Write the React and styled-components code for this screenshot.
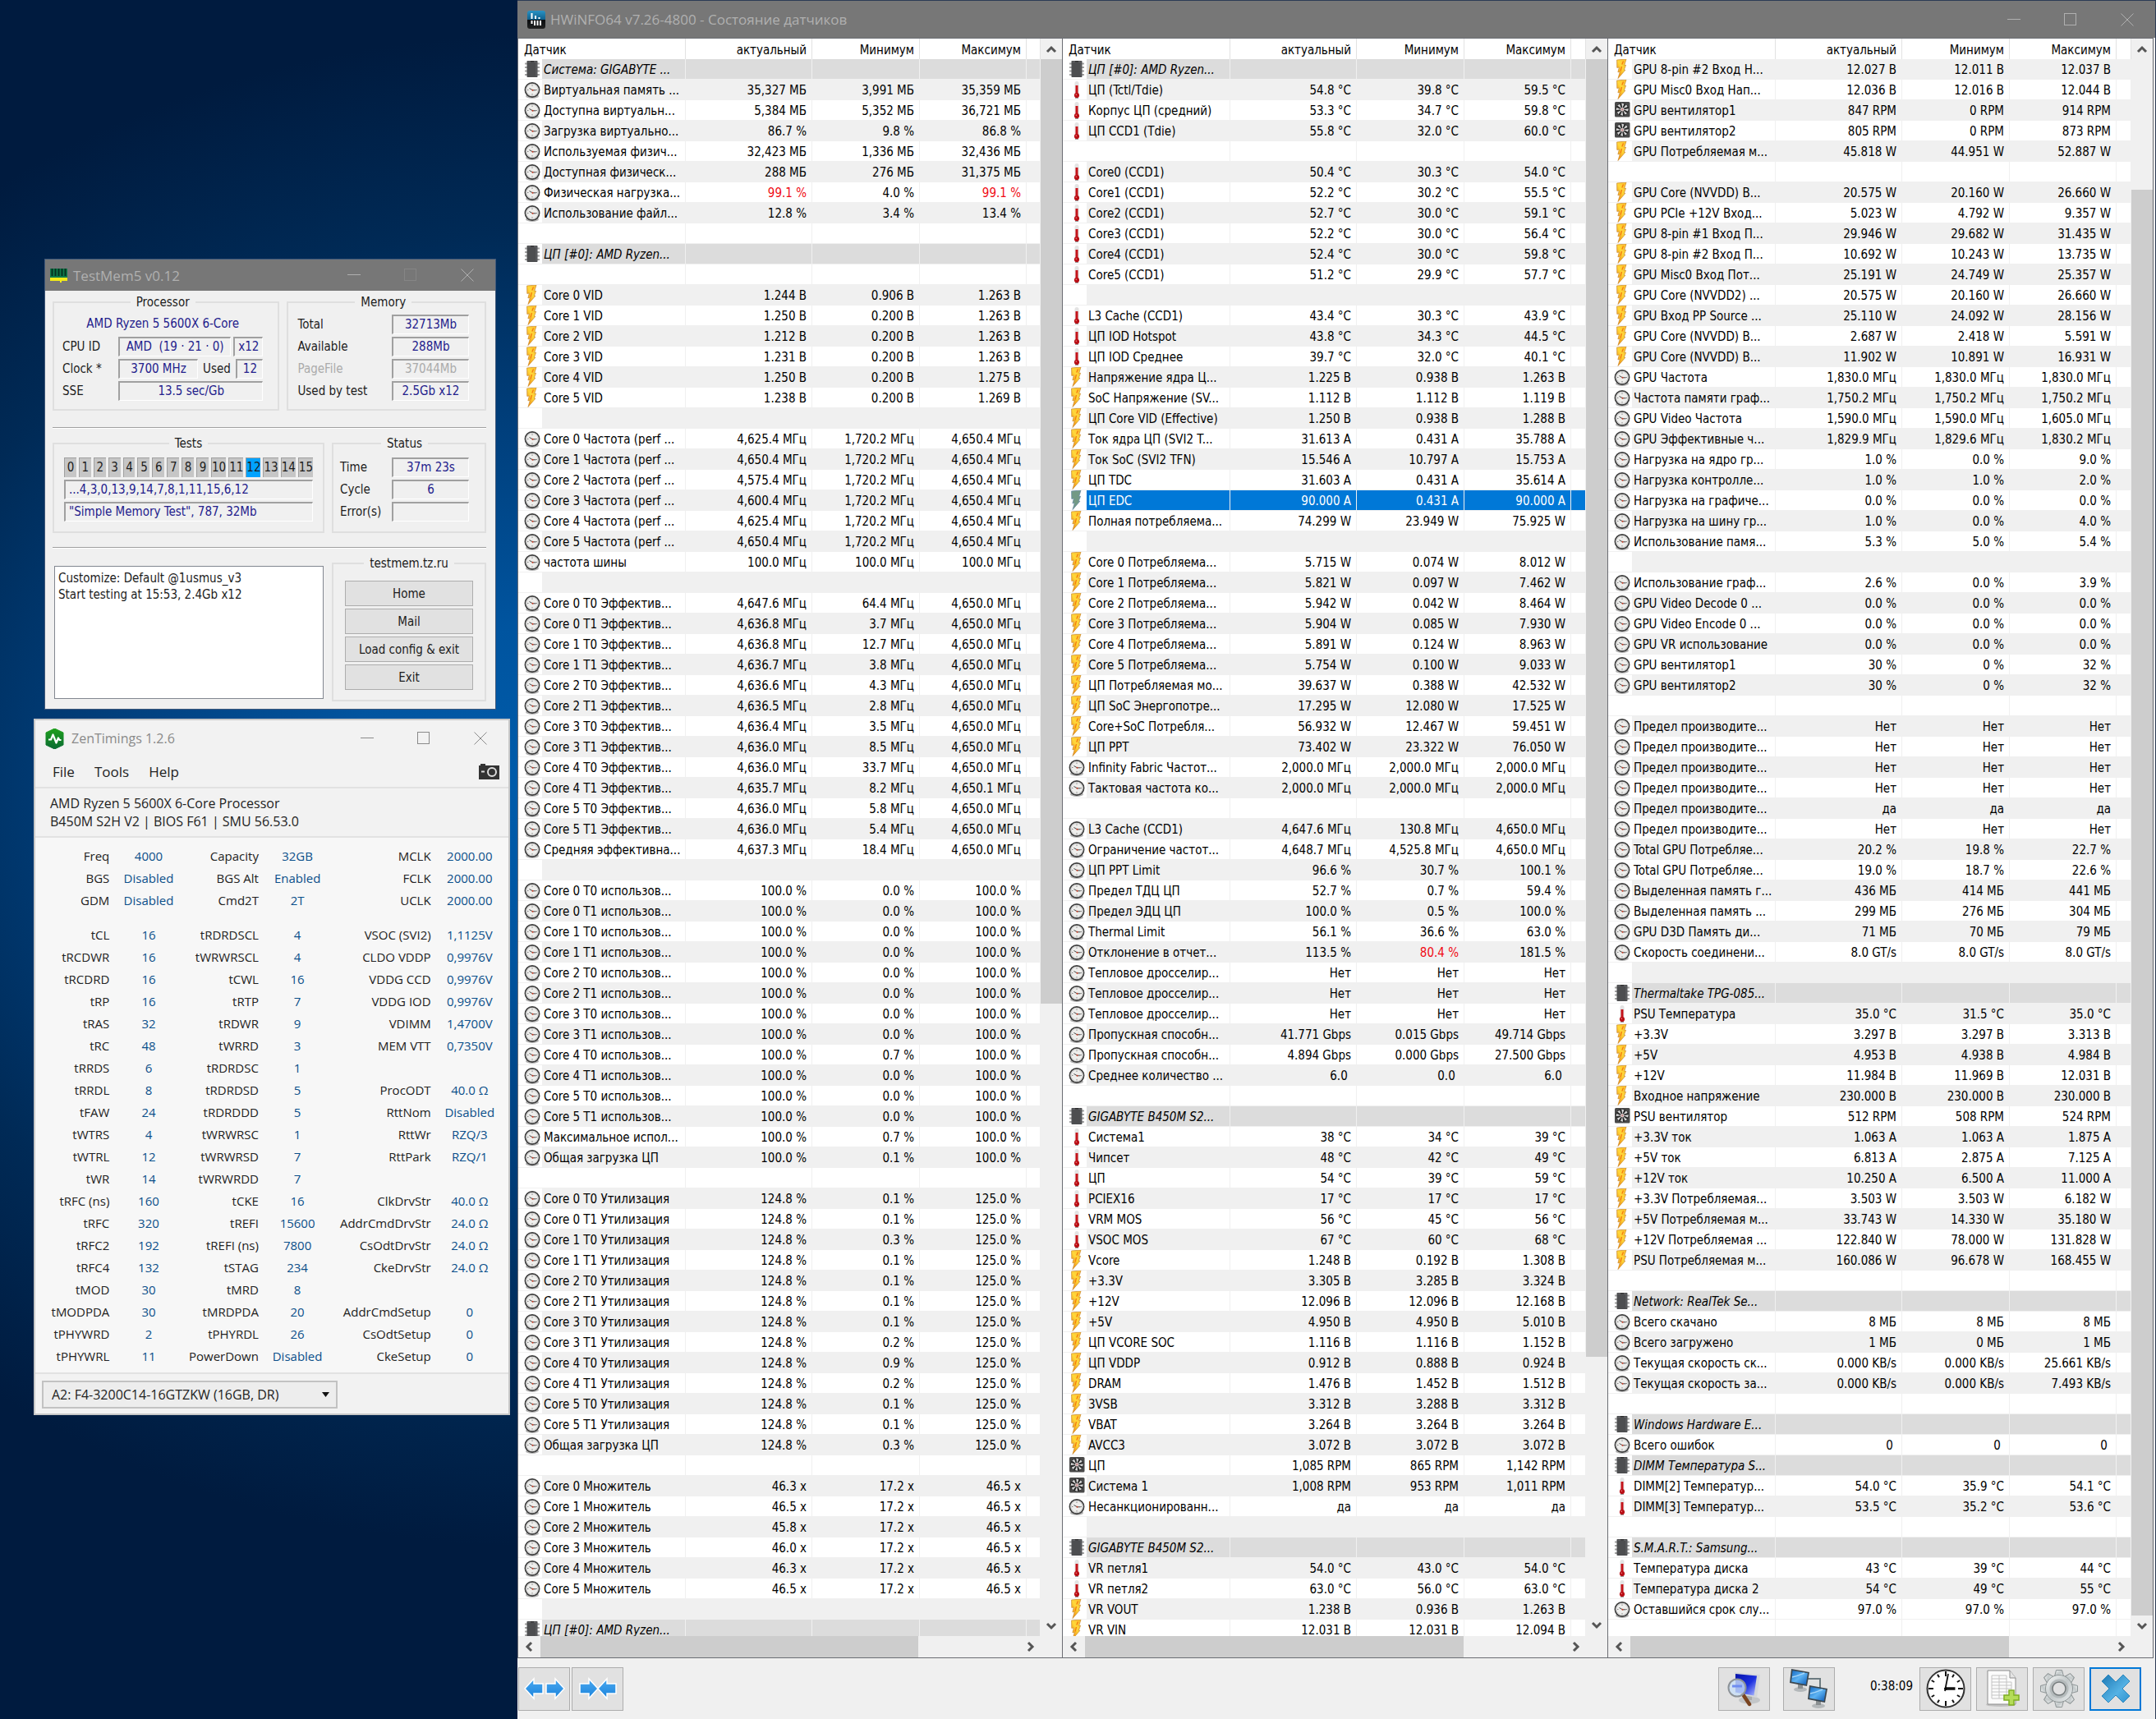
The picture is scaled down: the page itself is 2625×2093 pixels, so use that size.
import React from "react";
import styled, { createGlobalStyle, css } from "styled-components";

const tahoma = `"DejaVu Sans Condensed", "Noto Sans", sans-serif`;
const segoe = `"Open Sans", "Noto Sans", sans-serif`;

const GlobalStyle = createGlobalStyle`
  * {
    box-sizing: border-box;
  }
  body {
    margin: 0;
    font-family: ${tahoma};
    font-size: 15px;
    color: #000;
  }
  button, select, textarea {
    font: inherit;
    color: inherit;
    margin: 0;
    border-radius: 0;
  }
`;

/* ---------- desktop ---------- */

const Desktop = styled.div`
  display: grid;
  grid-template-columns: 24% minmax(0, 1fr);
  height: 100vh;
  min-height: 1750px;
  background: radial-gradient(
    ellipse 1100px 920px at 25% 46%,
    #005cab 0%,
    #00549f 22%,
    #003f7c 48%,
    #002a56 74%,
    #001b3f 100%
  );
`;
const Side = styled.div`
  display: flex;
  flex-direction: column;
  gap: 11px;
  padding: 315px 9px 0 41px;
`;

/* ---------- window title bars ---------- */

const TitleBar = styled.header`
  display: flex;
  align-items: center;
  height: ${(p) => p.$height}px;
  flex: none;
  padding-left: ${(p) => p.$pad}px;
  background: ${(p) => (p.$light ? "#f2f2f2" : "#777777")};
  color: ${(p) => (p.$light ? "#8a8a8a" : "#b0b0b0")};
  font-family: ${segoe};
  font-size: ${(p) => (p.$light ? 16 : 17)}px;
`;
const Title = styled.span`
  flex: 1;
  padding-left: ${(p) => p.$gap}px;
  white-space: nowrap;
`;
const TitleButton = styled.button`
  display: flex;
  align-items: center;
  justify-content: center;
  width: 69px;
  height: 100%;
  padding: 0;
  border: 0;
  background: none;
  opacity: ${(p) => (p.disabled ? 0.25 : 1)};
`;

const Controls = ({ noMax }) => (
  <>
    <TitleButton aria-label="Minimize">
      <svg width="16" height="16" stroke="currentColor">
        <path d="M0 7.5h16" />
      </svg>
    </TitleButton>
    <TitleButton aria-label="Maximize" disabled={noMax}>
      <svg width="16" height="16" stroke="currentColor" fill="none">
        <rect x=".5" y=".5" width="14" height="14" />
      </svg>
    </TitleButton>
    <TitleButton aria-label="Close">
      <svg width="16" height="16" stroke="currentColor">
        <path d="M.5.5l15 15M15.5.5l-15 15" />
      </svg>
    </TitleButton>
  </>
);

/* ---------- TestMem5 ---------- */

const MemWindow = styled.section`
  margin: 0 17px 0 13px;
  height: 549px;
  border: 1px solid #41597a;
  background: #f0f0f0;
  color: #1c1c1c;
`;
const MemBody = styled.div`
  padding: 3px 11px 0 9px;
`;
const MemRow = styled.div`
  display: grid;
  grid-template-columns: ${(p) => p.$cols};
  gap: 9px;
`;
const Group = styled.fieldset`
  min-width: 0;
  height: ${(p) => p.$height}px;
  margin: 0;
  padding: ${(p) => p.$pad};
  border: 2px solid #dfdfdf;
`;
const Legend = styled.legend`
  margin: 0 auto;
  padding: 0 7px;
  line-height: 22px;
`;
const Rule = styled.hr`
  height: 2px;
  margin: ${(p) => p.$margin};
  border: 0;
  border-top: 1px solid #a0a0a0;
  border-bottom: 1px solid #fff;
`;
const Line = styled.div`
  display: flex;
  align-items: center;
  gap: 3px;
  height: 24px;
  margin-bottom: 3px;
  color: ${(p) => (p.$off ? "#ababab" : "inherit")};
`;
const Caption = styled.span`
  flex: ${(p) => (p.$width ? `0 0 ${p.$width}px` : 1)};
  padding-left: ${(p) => (p.$center ? 3 : 0)}px;
  white-space: nowrap;
`;
const Sunken = styled.span`
  flex: ${(p) => (p.$width ? `0 0 ${p.$width}px` : 1)};
  height: 24px;
  padding: 0 4px;
  border: 1px solid;
  border-width: 2px 1px 1px 2px;
  border-color: #a0a0a0 #fff #fff #a0a0a0;
  color: ${(p) => (p.$off ? "#ababab" : "#23208c")};
  line-height: 20px;
  text-align: ${(p) => (p.$left ? "left" : "center")};
  white-space: pre;
`;
const CpuName = styled.div`
  height: 26px;
  margin-bottom: 3px;
  color: #23208c;
  line-height: 26px;
  text-align: center;
`;
const TestList = styled.ol`
  display: grid;
  grid-template-columns: repeat(16, 1fr);
  gap: 3px;
  height: 24px;
  margin: 0 0 3px;
  padding: 0;
  list-style: none;
`;
const TestItem = styled.li`
  display: flex;
  justify-content: center;
  border-top: 1px solid #a0a0a0;
  border-left: 1px solid #a0a0a0;
  background: ${(p) => (p.$active ? "#00a2ff" : "#c6c6c6")};
  line-height: 22px;
`;
const Log = styled.textarea`
  display: block;
  height: 162px;
  margin: 14px 1px 0 2px;
  padding: 4px;
  border: 1px solid #828790;
  background: #fff;
  line-height: 20px;
  resize: none;
  overflow: hidden;
`;
const MemButton = styled.button`
  display: block;
  width: 100%;
  height: 31px;
  margin-bottom: 3px;
  padding: 0;
  border: 1px solid #adadad;
  background: #e1e1e1;
  white-space: nowrap;
`;

const memory = [
  ["Total", "32713Mb"],
  ["Available", "288Mb"],
  ["PageFile", "37044Mb", true],
  ["Used by test", "2.5Gb x12"],
];
const status = [
  ["Time", "37m 23s"],
  ["Cycle", "6"],
  ["Error(s)", ""],
];

const TestMem = () => (
  <MemWindow>
    <TitleBar $height={38} $pad={6}>
      <svg width="21" height="17" viewBox="0 0 21 17">
        <rect width="21" height="11" fill="#0d7a4a" />
        <path d="M2.5 0v9M6.5 0v9M10.5 0v9M14.5 0v9M18.5 0v9" stroke="#05301f" strokeWidth="2" />
        <path d="M0 11h21v4h-7v2h-2v-2H0z" fill="#f2ea18" />
      </svg>
      <Title $gap={7}>TestMem5 v0.12</Title>
      <Controls noMax />
    </TitleBar>
    <MemBody>
      <MemRow $cols="277fr 243fr">
        <Group $height={143} $pad="2px 18px 0 10px">
          <Legend>Processor</Legend>
          <CpuName>AMD Ryzen 5 5600X 6-Core</CpuName>
          <Line>
            <Caption $width={65}>CPU ID</Caption>
            <Sunken>AMD  (19 · 21 · 0)</Sunken>
            <Sunken $width={33}>x12</Sunken>
          </Line>
          <Line>
            <Caption $width={65}>Clock *</Caption>
            <Sunken $width={97}>3700 MHz</Sunken>
            <Caption $center>Used</Caption>
            <Sunken $width={33}>12</Sunken>
          </Line>
          <Line>
            <Caption $width={65}>SSE</Caption>
            <Sunken>13.5 sec/Gb</Sunken>
          </Line>
        </Group>
        <Group $height={143} $pad="4px 19px 0 11px">
          <Legend>Memory</Legend>
          {memory.map(([label, value, off]) => (
            <Line key={label} $off={off}>
              <Caption>{label}</Caption>
              <Sunken $width={94} $off={off}>{value}</Sunken>
            </Line>
          ))}
        </Group>
      </MemRow>
      <Rule $margin="20px 0 7px" />
      <MemRow $cols="331fr 188fr">
        <Group $height={120} $pad="6px 12px 0">
          <Legend>Tests</Legend>
          <TestList>
            {[...Array(16).keys()].map((n) => (
              <TestItem key={n} $active={n === 12}>{n}</TestItem>
            ))}
          </TestList>
          <Line>
            <Sunken $left>...4,3,0,13,9,14,7,8,1,11,15,6,12</Sunken>
          </Line>
          <Line>
            <Sunken $left>"Simple Memory Test", 787, 32Mb</Sunken>
          </Line>
        </Group>
        <Group $height={120} $pad="6px 19px 0 8px">
          <Legend>Status</Legend>
          {status.map(([label, value]) => (
            <Line key={label}>
              <Caption>{label}</Caption>
              <Sunken $width={94}>{value}</Sunken>
            </Line>
          ))}
        </Group>
      </MemRow>
      <Rule $margin="17px 0 7px" />
      <MemRow $cols="331fr 188fr">
        <Log
          readOnly
          aria-label="Log"
          value={"Customize: Default @1usmus_v3\nStart testing at 15:53, 2.4Gb x12"}
        />
        <Group $height={179} $pad="10px 14px 0">
          <Legend>testmem.tz.ru</Legend>
          <MemButton>Home</MemButton>
          <MemButton>Mail</MemButton>
          <MemButton>Load config &amp; exit</MemButton>
          <MemButton>Exit</MemButton>
        </Group>
      </MemRow>
    </MemBody>
  </MemWindow>
);

/* ---------- ZenTimings ---------- */

const ZenWindow = styled.section`
  border: 2px solid #c8c8c8;
  background: #f7f7f7;
  color: #222;
  font-family: ${segoe};
  font-size: 15px;
`;
const MenuBar = styled.nav`
  display: flex;
  align-items: center;
  gap: 24px;
  height: 39px;
  padding: 0 11px 0 21px;
  border-bottom: 2px solid #e2e2e2;
  background: #f2f2f2;
`;
const MenuItem = styled.button`
  padding: 0;
  border: 0;
  background: none;
  font-size: 17px;
  &:last-child {
    display: flex;
    margin-left: auto;
  }
`;
const BoardInfo = styled.div`
  padding: 7px 18px;
  border-bottom: 2px solid #e2e2e2;
  background: #f2f2f2;
  font-size: 16px;
  line-height: 22px;
`;
const TimingTable = styled.table`
  width: 100%;
  margin: 8px 0 7px;
  border-collapse: collapse;
  table-layout: fixed;
  tr {
    height: 27px;
  }
`;
const TimingGap = styled.tr`
  && {
    height: 15px;
  }
`;
const TimingName = styled.th`
  padding: 0;
  font-weight: 400;
  line-height: 26px;
  text-align: right;
  white-space: nowrap;
`;
const TimingValue = styled.td`
  padding: 0;
  color: #0b4f8a;
  line-height: 26px;
  text-align: center;
`;
const ZenFooter = styled.footer`
  height: 50px;
  padding: 8px;
  border-top: 2px solid #e2e2e2;
  background: #f2f2f2;
`;
const SelectWrap = styled.div`
  position: relative;
  width: 360px;
  svg {
    position: absolute;
    right: 10px;
    top: 14px;
  }
`;
const Select = styled.select`
  width: 100%;
  height: 34px;
  padding: 0 10px;
  border: 2px solid #c2c2c2;
  background: #ededed;
  font-size: 16px;
  appearance: none;
`;

const clocks = [
  ["Freq", "4000", "Capacity", "32GB", "MCLK", "2000.00"],
  ["BGS", "Disabled", "BGS Alt", "Enabled", "FCLK", "2000.00"],
  ["GDM", "Disabled", "Cmd2T", "2T", "UCLK", "2000.00"],
];
const timings = [
  ["tCL", "16", "tRDRDSCL", "4", "VSOC (SVI2)", "1,1125V"],
  ["tRCDWR", "16", "tWRWRSCL", "4", "CLDO VDDP", "0,9976V"],
  ["tRCDRD", "16", "tCWL", "16", "VDDG CCD", "0,9976V"],
  ["tRP", "16", "tRTP", "7", "VDDG IOD", "0,9976V"],
  ["tRAS", "32", "tRDWR", "9", "VDIMM", "1,4700V"],
  ["tRC", "48", "tWRRD", "3", "MEM VTT", "0,7350V"],
  ["tRRDS", "6", "tRDRDSC", "1", "", ""],
  ["tRRDL", "8", "tRDRDSD", "5", "ProcODT", "40.0 Ω"],
  ["tFAW", "24", "tRDRDDD", "5", "RttNom", "Disabled"],
  ["tWTRS", "4", "tWRWRSC", "1", "RttWr", "RZQ/3"],
  ["tWTRL", "12", "tWRWRSD", "7", "RttPark", "RZQ/1"],
  ["tWR", "14", "tWRWRDD", "7", "", ""],
  ["tRFC (ns)", "160", "tCKE", "16", "ClkDrvStr", "40.0 Ω"],
  ["tRFC", "320", "tREFI", "15600", "AddrCmdDrvStr", "24.0 Ω"],
  ["tRFC2", "192", "tREFI (ns)", "7800", "CsOdtDrvStr", "24.0 Ω"],
  ["tRFC4", "132", "tSTAG", "234", "CkeDrvStr", "24.0 Ω"],
  ["tMOD", "30", "tMRD", "8", "", ""],
  ["tMODPDA", "30", "tMRDPDA", "20", "AddrCmdSetup", "0"],
  ["tPHYWRD", "2", "tPHYRDL", "26", "CsOdtSetup", "0"],
  ["tPHYWRL", "11", "PowerDown", "Disabled", "CkeSetup", "0"],
];

const TimingRow = ({ cells }) => (
  <tr>
    {cells.map((text, i) =>
      i % 2 ? <TimingValue key={i}>{text}</TimingValue> : <TimingName key={i}>{text}</TimingName>
    )}
  </tr>
);

const ZenTimings = () => (
  <ZenWindow>
    <TitleBar $light $height={44} $pad={12}>
      <svg width="23" height="25" viewBox="0 0 23 25">
        <path d="M11.500 0L22 5v15l-10.500 5L1 20V5z" fill="url(#zen)" stroke="url(#zen)" strokeLinejoin="round" />
        <path d="M4 13.500h3l2.500-6 4 10 2.500-6 1.500 2.500h2" fill="none" stroke="#fff" strokeWidth="2.200" strokeLinejoin="round" />
      </svg>
      <Title $gap={9}>ZenTimings 1.2.6</Title>
      <Controls />
    </TitleBar>
    <MenuBar>
      <MenuItem>File</MenuItem>
      <MenuItem>Tools</MenuItem>
      <MenuItem>Help</MenuItem>
      <MenuItem aria-label="Screenshot">
        <svg width="25" height="19" viewBox="0 0 25 19">
          <path d="M0 2h2V0h6v2h17v17H0z" fill="#333" />
          <circle cx="16" cy="10" r="5" fill="none" stroke="#ddd" strokeWidth="2" />
          <path d="M3 9.500h4" stroke="#ddd" strokeWidth="2" />
        </svg>
      </MenuItem>
    </MenuBar>
    <BoardInfo>
      <div>AMD Ryzen 5 5600X 6-Core Processor</div>
      <div>B450M S2H V2 | BIOS F61 | SMU 56.53.0</div>
    </BoardInfo>
    <TimingTable>
      <colgroup>
        <col width="90" />
        <col width="95" />
        <col width="86" />
        <col width="94" />
        <col width="115" />
        <col width="94" />
      </colgroup>
      <tbody>
        {clocks.map((cells) => <TimingRow key={cells[0]} cells={cells} />)}
        <TimingGap />
        {timings.map((cells) => <TimingRow key={cells[0]} cells={cells} />)}
      </tbody>
    </TimingTable>
    <ZenFooter>
      <SelectWrap>
        <Select aria-label="Memory module">
          <option>A2: F4-3200C14-16GTZKW (16GB, DR)</option>
        </Select>
        <svg width="9" height="6"><path d="M0 0h9L4.500 6z" fill="#111" /></svg>
      </SelectWrap>
    </ZenFooter>
  </ZenWindow>
);

/* ---------- HWiNFO64 ---------- */

const HwWindow = styled.section`
  display: flex;
  flex-direction: column;
  min-height: 0;
  border-top: 1px solid #2c3b55;
  border-right: 1px solid #2c3b55;
  background: #f0f0f0;
`;
const Panels = styled.main`
  display: grid;
  grid-template-columns: repeat(3, minmax(0, 1fr));
  flex: 1;
  min-height: 0;
  padding-right: 2px;
`;
const Panel = styled.div`
  display: grid;
  grid-template-columns: minmax(0, 1fr) 26px;
  grid-template-rows: minmax(0, 1fr) 26px;
  min-height: 0;
  border: 1px solid #6b6d73;
  & + & {
    margin-left: -1px;
  }
`;
const ListArea = styled.div`
  overflow: hidden;
  background: #fff;
`;
const SensorTable = styled.table`
  width: 100%;
  border-collapse: separate;
  border-spacing: 0;
  table-layout: fixed;
`;
const cell = css`
  height: 25px;
  padding: 2px 6px 0 0;
  border-right: 1px solid #f0f0f0;
  line-height: 22px;
  text-align: right;
  white-space: nowrap;
`;
const HeadCell = styled.th`
  ${cell}
  border-color: #e2e2e2;
  font-weight: 400;
  ${(p) => p.$first && "padding-left: 7px; text-align: left;"}
`;
const Cell = styled.td`
  ${cell}
  border-bottom: 1px solid #f0f0f0;
  color: ${(p) => (p.$alert ? "#f00a14" : "inherit")};
`;
const IconCell = styled.td`
  height: 25px;
  padding: 0 0 0 7px;
  border-bottom: 1px solid #f0f0f0;
  background: #fff;
  svg {
    display: block;
  }
`;
const NameCell = styled(Cell)`
  padding: 2px 0 0 2px;
  text-align: left;
`;
const Row = styled.tr`
  background: ${(p) => (p.$odd ? "#f0f0f0" : "#fff")};
  ${(p) =>
    p.$section &&
    css`
      background: #dcdcdc;
      font-style: italic;
    `}
  ${(p) =>
    p.$selected &&
    css`
      background: #0078d7;
      color: #fff;
    `}
`;

// Thumb range is given in thousandths of the track
const VScroll = styled.div`
  display: grid;
  grid-template-rows: 25px ${(p) => p.$from}fr ${(p) => p.$to - p.$from}fr ${(p) => 1000 - p.$to}fr 25px;
`;
const HScroll = styled.div`
  display: grid;
  grid-template-columns: 27px 79fr 21fr 27px;
`;
const Thumb = styled.div`
  background: #cdcdcd;
`;
const ScrollButton = styled.button`
  display: flex;
  align-items: center;
  justify-content: center;
  padding: 0;
  border: 0;
  background: none;
  color: #555;
`;

const arrowPaths = {
  up: "M2 10l5-5 5 5",
  down: "M2 4l5 5 5-5",
  left: "M9 2L4 7l5 5",
  right: "M5 2l5 5-5 5",
};
const Arrow = ({ dir }) => (
  <ScrollButton aria-label={`Scroll ${dir}`}>
    <svg width="14" height="14" fill="none" stroke="currentColor" strokeWidth="3">
      <path d={arrowPaths[dir]} />
    </svg>
  </ScrollButton>
);

// Icons shared by every sensor row
const Sprites = styled.svg`
  position: absolute;
  width: 0;
  height: 0;
`;
const teeth = [0, 45, 90, 135, 180, 225, 270, 315];
const Symbols = () => (
  <Sprites aria-hidden="true">
    <defs>
      <linearGradient id="zen" x1="0" y1="0" x2="0" y2="1">
        <stop offset="0" stopColor="#1fa01c" />
        <stop offset="1" stopColor="#0a6b33" />
      </linearGradient>
      <linearGradient id="gold" x1="1" y1="0" x2="0.200" y2="1">
        <stop offset="0" stopColor="#fdbb2c" />
        <stop offset="0.500" stopColor="#ffd83a" />
        <stop offset="1" stopColor="#f0860e" />
      </linearGradient>
      <linearGradient id="chrome" x1="0" y1="0" x2="1" y2="1">
        <stop offset="0" stopColor="#f4f6f6" />
        <stop offset="0.500" stopColor="#c3c9ca" />
        <stop offset="1" stopColor="#e6eaeb" />
      </linearGradient>
      <linearGradient id="screen" x1="0" y1="0" x2="1" y2="1">
        <stop offset="0" stopColor="#1569c4" />
        <stop offset="0.500" stopColor="#5db3f3" />
        <stop offset="1" stopColor="#0d5cb8" />
      </linearGradient>
      <linearGradient id="royal" x1="0" y1="0" x2="1" y2="1">
        <stop offset="0" stopColor="#0612a8" />
        <stop offset="0.550" stopColor="#1c30e0" />
        <stop offset="1" stopColor="#b9c4ff" />
      </linearGradient>
      <linearGradient id="cross" x1="0" y1="0" x2="1" y2="1">
        <stop offset="0" stopColor="#1c78b4" />
        <stop offset="0.600" stopColor="#55b2e4" />
        <stop offset="1" stopColor="#2f93d0" />
      </linearGradient>
      <linearGradient id="arrow" x1="0" y1="0" x2="0" y2="1">
        <stop offset="0" stopColor="#4aa9f0" />
        <stop offset="1" stopColor="#1b83dc" />
      </linearGradient>
      <linearGradient id="logo" x1="0" y1="0" x2="0" y2="1">
        <stop offset="0" stopColor="#2a93c4" />
        <stop offset="0.500" stopColor="#0f5f8c" />
        <stop offset="0.520" stopColor="#0a0d10" />
        <stop offset="1" stopColor="#222" />
      </linearGradient>
    </defs>
    <symbol id="icon-clock" viewBox="0 0 20 24">
      <ellipse cx="10" cy="20" rx="8" ry="3" fill="#b5b5b5" />
      <circle cx="10" cy="12.500" r="8.600" fill="#eeeeec" stroke="#3f3f3f" strokeWidth="1.700" />
      <circle cx="10" cy="12.500" r="7" fill="none" stroke="#cfcfcf" />
      <path d="M10 6.500v1.500M10 17v1.500M4 12.500h1.500M14.500 12.500H16" stroke="#888" />
      <path d="M6.500 10.500l4 2.300h4" fill="none" stroke="#444" />
      <circle cx="10.500" cy="12.800" r="1" fill="#d0402a" />
    </symbol>
    <symbol id="icon-bolt" viewBox="0 0 20 24">
      <path
        d="M3.600 1l11.400-1-2.300 7.500 1.900-.2-2.400 6 1.700-.1L5 23.500 7.300 15.500l-2.400.3L6.400 10l-2.600.4z"
        fill="url(#gold)"
        stroke="#c9862a"
        strokeWidth=".7"
        strokeLinejoin="round"
      />
      <path d="M9.500 9L8 14.500M11.500 2.500L9.800 6.500" stroke="#f47b10" strokeWidth="1.300" />
    </symbol>
    <symbol id="icon-bolt-selected" viewBox="0 0 20 24">
      <path
        d="M3.600 1l11.400-1-2.300 7.500 1.900-.2-2.400 6 1.700-.1L5 23.500 7.300 15.500l-2.400.3L6.400 10l-2.600.4z"
        fill="#739a85"
        stroke="#5f84a0"
        strokeWidth=".7"
      />
    </symbol>
    <symbol id="icon-temp" viewBox="0 0 20 24">
      <rect x="7.500" y="2" width="5" height="17" rx="2.500" fill="#e3e3e3" />
      <rect x="8.500" y="7" width="3" height="12" fill="#c5141b" />
      <circle cx="10" cy="19" r="3.100" fill="#b80f16" />
      <circle cx="9.300" cy="18.300" r=".8" fill="#f08080" />
      <path d="M8 22.500h4" stroke="#999" />
    </symbol>
    <symbol id="icon-fan" viewBox="0 0 20 24">
      <rect x="1" y="2" width="18.500" height="18.500" rx="1.500" fill="#4a4a4a" />
      <circle cx="10.200" cy="11.200" r="8" fill="#2a2a2a" />
      {teeth.map((a) => (
        <path key={a} d="M10.200 9.500L9.300 3.600l3.100.8z" fill="#dadada" transform={`rotate(${a} 10.200 11.200)`} />
      ))}
      <circle cx="10.200" cy="11.200" r="2.300" fill="#d9c9c9" />
      <circle cx="10.200" cy="11.200" r="1" fill="#c57878" />
    </symbol>
    <symbol id="icon-chip" viewBox="0 0 20 24">
      <path d="M1 5.500h18M1 10h18M1 14.500h18M1 19h18" stroke="#a2a2a2" strokeWidth="1.800" />
      <rect x="3.500" y="2" width="13" height="20" rx=".8" fill="#4d4e50" />
      <path d="M5 3.500h10v17" fill="none" stroke="#626366" />
      <path d="M8 2h4v1.500H8z" fill="#2c2c2c" />
    </symbol>
  </Sprites>
);

const iconIds = { c: "clock", b: "bolt", t: "temp", f: "fan", s: "chip", x: "bolt-selected" };

const Sensor = ({ row, odd }) => {
  const [kind, name, ...values] = row;
  const blank = !kind;
  return (
    <Row $odd={odd && kind !== "e"} $section={kind === "s"} $selected={kind === "x"}>
      <IconCell>
        {!blank && kind !== "e" && (
          <svg width="20" height="24">
            <use href={`#icon-${iconIds[kind]}`} />
          </svg>
        )}
      </IconCell>
      <NameCell>{name}</NameCell>
      {[0, 1, 2].map((i) => {
        const text = values[i] || "";
        return (
          <Cell key={i} $alert={text.startsWith("!")}>
            {text.replace("!", "")}
          </Cell>
        );
      })}
      <Cell />
    </Row>
  );
};

const SensorPanel = ({ rows, from, to, shift = 0 }) => (
  <Panel>
    <ListArea>
      <SensorTable>
        <colgroup>
          <col width="29" />
          <col width="175" />
          <col width="154" />
          <col width="131" />
          <col width="130" />
          <col />
        </colgroup>
        <thead>
          <tr>
            <HeadCell colSpan={2} $first>Датчик</HeadCell>
            <HeadCell>актуальный</HeadCell>
            <HeadCell>Минимум</HeadCell>
            <HeadCell>Максимум</HeadCell>
            <HeadCell />
          </tr>
        </thead>
        <tbody>
          {rows.map((row, i) => (
            <Sensor key={i} row={row} odd={(i + shift) % 2 === 1} />
          ))}
        </tbody>
      </SensorTable>
    </ListArea>
    <VScroll $from={from} $to={to}>
      <Arrow dir="up" />
      <div />
      <Thumb />
      <div />
      <Arrow dir="down" />
    </VScroll>
    <HScroll>
      <Arrow dir="left" />
      <Thumb />
      <div />
      <Arrow dir="right" />
    </HScroll>
  </Panel>
);

const _ = [""];

const systemRows = [
  ["s", "Система: GIGABYTE ..."],
  ["c", "Виртуальная память ...", "35,327 МБ", "3,991 МБ", "35,359 МБ"],
  ["c", "Доступна виртуальн...", "5,384 МБ", "5,352 МБ", "36,721 МБ"],
  ["c", "Загрузка виртуально...", "86.7 %", "9.8 %", "86.8 %"],
  ["c", "Используемая физич...", "32,423 МБ", "1,336 МБ", "32,436 МБ"],
  ["c", "Доступная физическ...", "288 МБ", "276 МБ", "31,375 МБ"],
  ["c", "Физическая нагрузка...", "!99.1 %", "4.0 %", "!99.1 %"],
  ["c", "Использование файл...", "12.8 %", "3.4 %", "13.4 %"],
  _,
  ["s", "ЦП [#0]: AMD Ryzen..."],
  _,
  ["b", "Core 0 VID", "1.244 В", "0.906 В", "1.263 В"],
  ["b", "Core 1 VID", "1.250 В", "0.200 В", "1.263 В"],
  ["b", "Core 2 VID", "1.212 В", "0.200 В", "1.263 В"],
  ["b", "Core 3 VID", "1.231 В", "0.200 В", "1.263 В"],
  ["b", "Core 4 VID", "1.250 В", "0.200 В", "1.275 В"],
  ["b", "Core 5 VID", "1.238 В", "0.200 В", "1.269 В"],
  _,
  ["c", "Core 0 Частота (perf ...", "4,625.4 МГц", "1,720.2 МГц", "4,650.4 МГц"],
  ["c", "Core 1 Частота (perf ...", "4,650.4 МГц", "1,720.2 МГц", "4,650.4 МГц"],
  ["c", "Core 2 Частота (perf ...", "4,575.4 МГц", "1,720.2 МГц", "4,650.4 МГц"],
  ["c", "Core 3 Частота (perf ...", "4,600.4 МГц", "1,720.2 МГц", "4,650.4 МГц"],
  ["c", "Core 4 Частота (perf ...", "4,625.4 МГц", "1,720.2 МГц", "4,650.4 МГц"],
  ["c", "Core 5 Частота (perf ...", "4,650.4 МГц", "1,720.2 МГц", "4,650.4 МГц"],
  ["c", "частота шины", "100.0 МГц", "100.0 МГц", "100.0 МГц"],
  _,
  ["c", "Core 0 T0 Эффектив...", "4,647.6 МГц", "64.4 МГц", "4,650.0 МГц"],
  ["c", "Core 0 T1 Эффектив...", "4,636.8 МГц", "3.7 МГц", "4,650.0 МГц"],
  ["c", "Core 1 T0 Эффектив...", "4,636.8 МГц", "12.7 МГц", "4,650.0 МГц"],
  ["c", "Core 1 T1 Эффектив...", "4,636.7 МГц", "3.8 МГц", "4,650.0 МГц"],
  ["c", "Core 2 T0 Эффектив...", "4,636.6 МГц", "4.3 МГц", "4,650.0 МГц"],
  ["c", "Core 2 T1 Эффектив...", "4,636.5 МГц", "2.8 МГц", "4,650.0 МГц"],
  ["c", "Core 3 T0 Эффектив...", "4,636.4 МГц", "3.5 МГц", "4,650.0 МГц"],
  ["c", "Core 3 T1 Эффектив...", "4,636.0 МГц", "8.5 МГц", "4,650.0 МГц"],
  ["c", "Core 4 T0 Эффектив...", "4,636.0 МГц", "33.7 МГц", "4,650.0 МГц"],
  ["c", "Core 4 T1 Эффектив...", "4,635.7 МГц", "8.2 МГц", "4,650.1 МГц"],
  ["c", "Core 5 T0 Эффектив...", "4,636.0 МГц", "5.8 МГц", "4,650.0 МГц"],
  ["c", "Core 5 T1 Эффектив...", "4,636.0 МГц", "5.4 МГц", "4,650.0 МГц"],
  ["c", "Средняя эффективна...", "4,637.3 МГц", "18.4 МГц", "4,650.0 МГц"],
  _,
  ["c", "Core 0 T0 использов...", "100.0 %", "0.0 %", "100.0 %"],
  ["c", "Core 0 T1 использов...", "100.0 %", "0.0 %", "100.0 %"],
  ["c", "Core 1 T0 использов...", "100.0 %", "0.0 %", "100.0 %"],
  ["c", "Core 1 T1 использов...", "100.0 %", "0.0 %", "100.0 %"],
  ["c", "Core 2 T0 использов...", "100.0 %", "0.0 %", "100.0 %"],
  ["c", "Core 2 T1 использов...", "100.0 %", "0.0 %", "100.0 %"],
  ["c", "Core 3 T0 использов...", "100.0 %", "0.0 %", "100.0 %"],
  ["c", "Core 3 T1 использов...", "100.0 %", "0.0 %", "100.0 %"],
  ["c", "Core 4 T0 использов...", "100.0 %", "0.7 %", "100.0 %"],
  ["c", "Core 4 T1 использов...", "100.0 %", "0.0 %", "100.0 %"],
  ["c", "Core 5 T0 использов...", "100.0 %", "0.0 %", "100.0 %"],
  ["c", "Core 5 T1 использов...", "100.0 %", "0.0 %", "100.0 %"],
  ["c", "Максимальное испол...", "100.0 %", "0.7 %", "100.0 %"],
  ["c", "Общая загрузка ЦП", "100.0 %", "0.1 %", "100.0 %"],
  _,
  ["c", "Core 0 T0 Утилизация", "124.8 %", "0.1 %", "125.0 %"],
  ["c", "Core 0 T1 Утилизация", "124.8 %", "0.1 %", "125.0 %"],
  ["c", "Core 1 T0 Утилизация", "124.8 %", "0.3 %", "125.0 %"],
  ["c", "Core 1 T1 Утилизация", "124.8 %", "0.1 %", "125.0 %"],
  ["c", "Core 2 T0 Утилизация", "124.8 %", "0.1 %", "125.0 %"],
  ["c", "Core 2 T1 Утилизация", "124.8 %", "0.1 %", "125.0 %"],
  ["c", "Core 3 T0 Утилизация", "124.8 %", "0.1 %", "125.0 %"],
  ["c", "Core 3 T1 Утилизация", "124.8 %", "0.2 %", "125.0 %"],
  ["c", "Core 4 T0 Утилизация", "124.8 %", "0.9 %", "125.0 %"],
  ["c", "Core 4 T1 Утилизация", "124.8 %", "0.2 %", "125.0 %"],
  ["c", "Core 5 T0 Утилизация", "124.8 %", "0.1 %", "125.0 %"],
  ["c", "Core 5 T1 Утилизация", "124.8 %", "0.1 %", "125.0 %"],
  ["c", "Общая загрузка ЦП", "124.8 %", "0.3 %", "125.0 %"],
  _,
  ["c", "Core 0 Множитель", "46.3 x", "17.2 x", "46.5 x"],
  ["c", "Core 1 Множитель", "46.5 x", "17.2 x", "46.5 x"],
  ["c", "Core 2 Множитель", "45.8 x", "17.2 x", "46.5 x"],
  ["c", "Core 3 Множитель", "46.0 x", "17.2 x", "46.5 x"],
  ["c", "Core 4 Множитель", "46.3 x", "17.2 x", "46.5 x"],
  ["c", "Core 5 Множитель", "46.5 x", "17.2 x", "46.5 x"],
  _,
  ["s", "ЦП [#0]: AMD Ryzen..."],
];

const cpuRows = [
  ["s", "ЦП [#0]: AMD Ryzen..."],
  ["t", "ЦП (Tctl/Tdie)", "54.8 °C", "39.8 °C", "59.5 °C"],
  ["t", "Корпус ЦП (средний)", "53.3 °C", "34.7 °C", "59.8 °C"],
  ["t", "ЦП CCD1 (Tdie)", "55.8 °C", "32.0 °C", "60.0 °C"],
  _,
  ["t", "Core0 (CCD1)", "50.4 °C", "30.3 °C", "54.0 °C"],
  ["t", "Core1 (CCD1)", "52.2 °C", "30.2 °C", "55.5 °C"],
  ["t", "Core2 (CCD1)", "52.7 °C", "30.0 °C", "59.1 °C"],
  ["t", "Core3 (CCD1)", "52.2 °C", "30.0 °C", "56.4 °C"],
  ["t", "Core4 (CCD1)", "52.4 °C", "30.0 °C", "59.8 °C"],
  ["t", "Core5 (CCD1)", "51.2 °C", "29.9 °C", "57.7 °C"],
  _,
  ["t", "L3 Cache (CCD1)", "43.4 °C", "30.3 °C", "43.9 °C"],
  ["t", "ЦП IOD Hotspot", "43.8 °C", "34.3 °C", "44.5 °C"],
  ["t", "ЦП IOD Среднее", "39.7 °C", "32.0 °C", "40.1 °C"],
  ["b", "Напряжение ядра Ц...", "1.225 В", "0.938 В", "1.263 В"],
  ["b", "SoC Напряжение (SV...", "1.112 В", "1.112 В", "1.119 В"],
  ["b", "ЦП Core VID (Effective)", "1.250 В", "0.938 В", "1.288 В"],
  ["b", "Ток ядра ЦП (SVI2 T...", "31.613 A", "0.431 A", "35.788 A"],
  ["b", "Ток SoC (SVI2 TFN)", "15.546 A", "10.797 A", "15.753 A"],
  ["b", "ЦП TDC", "31.603 A", "0.431 A", "35.614 A"],
  ["x", "ЦП EDC", "90.000 A", "0.431 A", "90.000 A"],
  ["b", "Полная потребляема...", "74.299 W", "23.949 W", "75.925 W"],
  _,
  ["b", "Core 0 Потребляема...", "5.715 W", "0.074 W", "8.012 W"],
  ["b", "Core 1 Потребляема...", "5.821 W", "0.097 W", "7.462 W"],
  ["b", "Core 2 Потребляема...", "5.942 W", "0.042 W", "8.464 W"],
  ["b", "Core 3 Потребляема...", "5.904 W", "0.085 W", "7.930 W"],
  ["b", "Core 4 Потребляема...", "5.891 W", "0.124 W", "8.963 W"],
  ["b", "Core 5 Потребляема...", "5.754 W", "0.100 W", "9.033 W"],
  ["b", "ЦП Потребляемая мо...", "39.637 W", "0.388 W", "42.532 W"],
  ["b", "ЦП SoC Энергопотре...", "17.295 W", "12.080 W", "17.525 W"],
  ["b", "Core+SoC Потребля...", "56.932 W", "12.467 W", "59.451 W"],
  ["b", "ЦП PPT", "73.402 W", "23.322 W", "76.050 W"],
  ["c", "Infinity Fabric Частот...", "2,000.0 МГц", "2,000.0 МГц", "2,000.0 МГц"],
  ["c", "Тактовая частота ко...", "2,000.0 МГц", "2,000.0 МГц", "2,000.0 МГц"],
  _,
  ["c", "L3 Cache (CCD1)", "4,647.6 МГц", "130.8 МГц", "4,650.0 МГц"],
  ["c", "Ограничение частот...", "4,648.7 МГц", "4,525.8 МГц", "4,650.0 МГц"],
  ["c", "ЦП PPT Limit", "96.6 %", "30.7 %", "100.1 %"],
  ["c", "Предел ТДЦ ЦП", "52.7 %", "0.7 %", "59.4 %"],
  ["c", "Предел ЭДЦ ЦП", "100.0 %", "0.5 %", "100.0 %"],
  ["c", "Thermal Limit", "56.1 %", "36.6 %", "63.0 %"],
  ["c", "Отклонение в отчет...", "113.5 %", "!80.4 %", "181.5 %"],
  ["c", "Тепловое дросселир...", "Нет", "Нет", "Нет"],
  ["c", "Тепловое дросселир...", "Нет", "Нет", "Нет"],
  ["c", "Тепловое дросселир...", "Нет", "Нет", "Нет"],
  ["c", "Пропускная способн...", "41.771 Gbps", "0.015 Gbps", "49.714 Gbps"],
  ["c", "Пропускная способн...", "4.894 Gbps", "0.000 Gbps", "27.500 Gbps"],
  ["c", "Среднее количество ...", "6.0\u00a0", "0.0\u00a0", "6.0\u00a0"],
  _,
  ["s", "GIGABYTE B450M S2..."],
  ["t", "Система1", "38 °C", "34 °C", "39 °C"],
  ["t", "Чипсет", "48 °C", "42 °C", "49 °C"],
  ["t", "ЦП", "54 °C", "39 °C", "59 °C"],
  ["t", "PCIEX16", "17 °C", "17 °C", "17 °C"],
  ["t", "VRM MOS", "56 °C", "45 °C", "56 °C"],
  ["t", "VSOC MOS", "67 °C", "60 °C", "68 °C"],
  ["b", "Vcore", "1.248 В", "0.192 В", "1.308 В"],
  ["b", "+3.3V", "3.305 В", "3.285 В", "3.324 В"],
  ["b", "+12V", "12.096 В", "12.096 В", "12.168 В"],
  ["b", "+5V", "4.950 В", "4.950 В", "5.010 В"],
  ["b", "ЦП VCORE SOC", "1.116 В", "1.116 В", "1.152 В"],
  ["b", "ЦП VDDP", "0.912 В", "0.888 В", "0.924 В"],
  ["b", "DRAM", "1.476 В", "1.452 В", "1.512 В"],
  ["b", "3VSB", "3.312 В", "3.288 В", "3.312 В"],
  ["b", "VBAT", "3.264 В", "3.264 В", "3.264 В"],
  ["b", "AVCC3", "3.072 В", "3.072 В", "3.072 В"],
  ["f", "ЦП", "1,085 RPM", "865 RPM", "1,142 RPM"],
  ["f", "Система 1", "1,008 RPM", "953 RPM", "1,011 RPM"],
  ["c", "Несанкционированн...", "да", "да", "да"],
  _,
  ["s", "GIGABYTE B450M S2..."],
  ["t", "VR петля1", "54.0 °C", "43.0 °C", "54.0 °C"],
  ["t", "VR петля2", "63.0 °C", "56.0 °C", "63.0 °C"],
  ["b", "VR VOUT", "1.238 В", "0.936 В", "1.263 В"],
  ["b", "VR VIN", "12.031 В", "12.031 В", "12.094 В"],
];

const gpuRows = [
  ["b", "GPU 8-pin #2 Вход Н...", "12.027 В", "12.011 В", "12.037 В"],
  ["b", "GPU Misc0 Вход Нап...", "12.036 В", "12.016 В", "12.044 В"],
  ["f", "GPU вентилятор1", "847 RPM", "0 RPM", "914 RPM"],
  ["f", "GPU вентилятор2", "805 RPM", "0 RPM", "873 RPM"],
  ["b", "GPU Потребляемая м...", "45.818 W", "44.951 W", "52.887 W"],
  _,
  ["b", "GPU Core (NVVDD) В...", "20.575 W", "20.160 W", "26.660 W"],
  ["b", "GPU PCIe +12V Вход...", "5.023 W", "4.792 W", "9.357 W"],
  ["b", "GPU 8-pin #1 Вход П...", "29.946 W", "29.682 W", "31.435 W"],
  ["b", "GPU 8-pin #2 Вход П...", "10.692 W", "10.243 W", "13.735 W"],
  ["b", "GPU Misc0 Вход Пот...", "25.191 W", "24.749 W", "25.357 W"],
  ["b", "GPU Core (NVVDD2) ...", "20.575 W", "20.160 W", "26.660 W"],
  ["b", "GPU Вход PP Source ...", "25.110 W", "24.092 W", "28.156 W"],
  ["b", "GPU Core (NVVDD) В...", "2.687 W", "2.418 W", "5.591 W"],
  ["b", "GPU Core (NVVDD) В...", "11.902 W", "10.891 W", "16.931 W"],
  ["c", "GPU Частота", "1,830.0 МГц", "1,830.0 МГц", "1,830.0 МГц"],
  ["c", "Частота памяти граф...", "1,750.2 МГц", "1,750.2 МГц", "1,750.2 МГц"],
  ["c", "GPU Video Частота", "1,590.0 МГц", "1,590.0 МГц", "1,605.0 МГц"],
  ["c", "GPU Эффективные ч...", "1,829.9 МГц", "1,829.6 МГц", "1,830.2 МГц"],
  ["c", "Нагрузка на ядро гр...", "1.0 %", "0.0 %", "9.0 %"],
  ["c", "Нагрузка контролле...", "1.0 %", "1.0 %", "2.0 %"],
  ["c", "Нагрузка на графиче...", "0.0 %", "0.0 %", "0.0 %"],
  ["c", "Нагрузка на шину гр...", "1.0 %", "0.0 %", "4.0 %"],
  ["c", "Использование памя...", "5.3 %", "5.0 %", "5.4 %"],
  _,
  ["c", "Использование граф...", "2.6 %", "0.0 %", "3.9 %"],
  ["c", "GPU Video Decode 0 ...", "0.0 %", "0.0 %", "0.0 %"],
  ["c", "GPU Video Encode 0 ...", "0.0 %", "0.0 %", "0.0 %"],
  ["c", "GPU VR использование", "0.0 %", "0.0 %", "0.0 %"],
  ["c", "GPU вентилятор1", "30 %", "0 %", "32 %"],
  ["c", "GPU вентилятор2", "30 %", "0 %", "32 %"],
  _,
  ["c", "Предел производите...", "Нет", "Нет", "Нет"],
  ["c", "Предел производите...", "Нет", "Нет", "Нет"],
  ["c", "Предел производите...", "Нет", "Нет", "Нет"],
  ["c", "Предел производите...", "Нет", "Нет", "Нет"],
  ["c", "Предел производите...", "да", "да", "да"],
  ["c", "Предел производите...", "Нет", "Нет", "Нет"],
  ["c", "Total GPU Потребляе...", "20.2 %", "19.8 %", "22.7 %"],
  ["c", "Total GPU Потребляе...", "19.0 %", "18.7 %", "22.6 %"],
  ["c", "Выделенная память г...", "436 МБ", "414 МБ", "441 МБ"],
  ["c", "Выделенная память ...", "299 МБ", "276 МБ", "304 МБ"],
  ["c", "GPU D3D Память ди...", "71 МБ", "70 МБ", "79 МБ"],
  ["c", "Скорость соединени...", "8.0 GT/s", "8.0 GT/s", "8.0 GT/s"],
  _,
  ["s", "Thermaltake TPG-085..."],
  ["t", "PSU Температура", "35.0 °C", "31.5 °C", "35.0 °C"],
  ["b", "+3.3V", "3.297 В", "3.297 В", "3.313 В"],
  ["b", "+5V", "4.953 В", "4.938 В", "4.984 В"],
  ["b", "+12V", "11.984 В", "11.969 В", "12.031 В"],
  ["b", "Входное напряжение", "230.000 В", "230.000 В", "230.000 В"],
  ["f", "PSU вентилятор", "512 RPM", "508 RPM", "524 RPM"],
  ["b", "+3.3V ток", "1.063 A", "1.063 A", "1.875 A"],
  ["b", "+5V ток", "6.813 A", "2.875 A", "7.125 A"],
  ["b", "+12V ток", "10.250 A", "6.500 A", "11.000 A"],
  ["b", "+3.3V Потребляемая...", "3.503 W", "3.503 W", "6.182 W"],
  ["b", "+5V Потребляемая м...", "33.743 W", "14.330 W", "35.180 W"],
  ["b", "+12V Потребляемая ...", "122.840 W", "78.000 W", "131.828 W"],
  ["b", "PSU Потребляемая м...", "160.086 W", "96.678 W", "168.455 W"],
  _,
  ["s", "Network: RealTek Se..."],
  ["c", "Всего скачано", "8 МБ", "8 МБ", "8 МБ"],
  ["c", "Всего загружено", "1 МБ", "0 МБ", "1 МБ"],
  ["c", "Текущая скорость ск...", "0.000 KB/s", "0.000 KB/s", "25.661 KB/s"],
  ["c", "Текущая скорость за...", "0.000 KB/s", "0.000 KB/s", "7.493 KB/s"],
  _,
  ["s", "Windows Hardware E..."],
  ["c", "Всего ошибок", "0\u00a0", "0\u00a0", "0\u00a0"],
  ["s", "DIMM Температура S..."],
  ["t", "DIMM[2] Температур...", "54.0 °C", "35.9 °C", "54.1 °C"],
  ["t", "DIMM[3] Температур...", "53.5 °C", "35.2 °C", "53.6 °C"],
  _,
  ["s", "S.M.A.R.T.: Samsung..."],
  ["t", "Температура диска", "43 °C", "39 °C", "44 °C"],
  ["t", "Температура диска 2", "54 °C", "49 °C", "55 °C"],
  ["c", "Оставшийся срок слу...", "97.0 %", "97.0 %", "97.0 %"],
  ["e"],
];

const Toolbar = styled.footer`
  display: flex;
  align-items: center;
  flex: none;
  height: 74px;
  padding: 0 17px 0 1px;
`;
const ToolGroup = styled.div`
  display: flex;
  gap: ${(p) => p.$gap}px;
  ${(p) => p.$end && "margin-left: auto;"}
`;
const Elapsed = styled.time`
  margin: 0 8px 6px 43px;
`;
const ToolButton = styled.button`
  display: flex;
  align-items: center;
  justify-content: center;
  width: 63px;
  height: 53px;
  padding: 0;
  border: ${(p) => (p.$focused ? "2px solid #0078d7" : "1px solid #adadad")};
  background: #e1e1e1;
`;

const Monitor = ({ x, y }) => (
  <g transform={`translate(${x} ${y})`}>
    <ellipse cx="13" cy="25" rx="8" ry="3" fill="#b4b8ba" />
    <path d="M10 18h6v6h-6z" fill="#8b9092" />
    <path d="M2 0l22 4-3 17-21-4z" fill="#3b4750" />
    <path d="M3.500 2l18.500 3.300L19.700 19 2 15.500z" fill="url(#screen)" />
    <path d="M3 10c6-1 10-3 15-5" fill="none" stroke="#a8d8fa" strokeWidth="1.500" />
  </g>
);

const HwInfo = () => (
  <HwWindow>
    <TitleBar $height={45} $pad={12}>
      <svg width="22" height="22" viewBox="0 0 22 22">
        <rect width="22" height="22" rx="3" fill="url(#logo)" />
        <path d="M5.500 3v7M10 6v4M14.500 8v2M5.500 12v4M9 12v6M12.500 12v6M16 12v6" stroke="#fff" strokeWidth="2" />
      </svg>
      <Title $gap={6}>HWiNFO64 v7.26-4800 - Состояние датчиков</Title>
      <Controls />
    </TitleBar>
    <Panels>
      <SensorPanel rows={systemRows} from={0} to={607} />
      <SensorPanel rows={cpuRows} from={0} to={834} />
      <SensorPanel rows={gpuRows} from={84} to={1000} shift={1} />
    </Panels>
    <Toolbar>
      <ToolGroup $gap={2}>
        <ToolButton aria-label="Expand columns">
          <svg width="50" height="28" viewBox="0 0 50 28" fill="url(#arrow)" stroke="#fff" strokeWidth="1.500">
            <path d="M1 14L12 2v6h11v12H12v6z" />
            <path d="M49 14L38 2v6H27v12h11v6z" />
          </svg>
        </ToolButton>
        <ToolButton aria-label="Shrink columns">
          <svg width="50" height="28" viewBox="0 0 50 28" fill="url(#arrow)" stroke="#fff" strokeWidth="1.500">
            <path d="M25 14L14 2v6H3v12h11v6z" />
            <path d="M25 14L36 2v6h11v12H36v6z" />
          </svg>
        </ToolButton>
      </ToolGroup>
      <ToolGroup $gap={16} $end>
        <ToolButton aria-label="Find sensor">
          <svg width="44" height="44" viewBox="0 0 44 44">
            <ellipse cx="29" cy="36" rx="13" ry="4.500" fill="#c3c6c8" />
            <path d="M24 28h8v8h-8z" fill="#a7abad" />
            <path d="M11 2l31 3-4 28-27-5z" fill="#d4d7da" />
            <path d="M12 4l26 2.500-3.500 24L12 26.500z" fill="url(#royal)" />
            <path d="M21 29l8 12" stroke="#7a4420" strokeWidth="4.500" strokeLinecap="round" />
            <circle cx="14" cy="21" r="10.500" fill="#c9e0f8" fillOpacity=".8" stroke="#8d9398" strokeWidth="2" />
            <path d="M8 19h12" stroke="#6f8df0" strokeWidth="3" />
          </svg>
        </ToolButton>
        <ToolButton aria-label="Network">
          <svg width="50" height="48" viewBox="0 0 50 48">
            <path d="M24 12h15v12" fill="none" stroke="#6c7b80" strokeWidth="2" />
            <Monitor x={2} y={0} />
            <Monitor x={24} y={20} />
          </svg>
        </ToolButton>
      </ToolGroup>
      <Elapsed>0:38:09</Elapsed>
      <ToolGroup $gap={6}>
        <ToolButton aria-label="Reset timer">
          <svg width="48" height="48" viewBox="0 0 48 48" stroke="#111">
            <circle cx="24" cy="24" r="22.500" fill="#fff" stroke="#333" strokeWidth="2" />
            {[...Array(12).keys()].map((n) => (
              <path key={n} d={n % 3 ? "M24 4v4" : "M24 3v6"} strokeWidth="2" transform={`rotate(${n * 30} 24 24)`} />
            ))}
            <path d="M24 24h11.500" strokeWidth="3.500" />
            <path d="M23 27l4-21" strokeWidth="1.800" />
            <circle cx="24" cy="24" r="1.500" />
          </svg>
        </ToolButton>
        <ToolButton aria-label="Save report">
          <svg width="44" height="46" viewBox="0 0 44 46">
            <ellipse cx="20" cy="42.500" rx="18" ry="2.500" fill="#c2c2c2" />
            <path d="M4 1h27l7 9v32H4z" fill="#fbfbfb" stroke="#8d8d8d" />
            <path d="M31 1v9h7" fill="#e4e4e4" stroke="#8d8d8d" />
            <path
              d="M9 7h18M9 11h18M9 15h24M9 19h24M9 23h24M9 27h24M9 31h24M9 35h24M9 7v28M18 7v28M27 7v28M33 15v20"
              stroke="#c4c4c4"
              fill="none"
            />
            <path d="M30 25h6v6h6v6h-6v6h-6v-6h-6v-6h6z" fill="#b4dc58" stroke="#7fae22" strokeWidth="1.500" />
          </svg>
        </ToolButton>
        <ToolButton aria-label="Settings">
          <svg width="48" height="48" viewBox="0 0 48 48">
            <g fill="url(#chrome)" stroke="#8e9596">
              {teeth.map((a) => (
                <path key={a} d="M18.500 9l2-7.500h7l2 7.500z" transform={`rotate(${a} 24 24)`} />
              ))}
              <circle cx="24" cy="24" r="16.500" />
            </g>
            <circle cx="24" cy="24" r="15.500" fill="url(#chrome)" />
            <circle cx="24" cy="24" r="11.500" fill="#b4babb" />
            <circle cx="24" cy="24" r="8" fill="#e1e1e1" stroke="#757b7c" strokeWidth="1.500" />
          </svg>
        </ToolButton>
        <ToolButton aria-label="Close sensors" $focused>
          <svg width="36" height="36" viewBox="0 0 36 36">
            <path
              d="M9 1l9 9 9-9 8 8-9 9 9 9-8 8-9-9-9 9-8-8 9-9-9-9z"
              fill="url(#cross)"
              stroke="#2f87bd"
            />
          </svg>
        </ToolButton>
      </ToolGroup>
    </Toolbar>
  </HwWindow>
);

const App = () => {
  return (
    <>
      <GlobalStyle />
      <Symbols />
      <Desktop>
        <Side>
          <TestMem />
          <ZenTimings />
        </Side>
        <HwInfo />
      </Desktop>
    </>
  );
};

export default App;
